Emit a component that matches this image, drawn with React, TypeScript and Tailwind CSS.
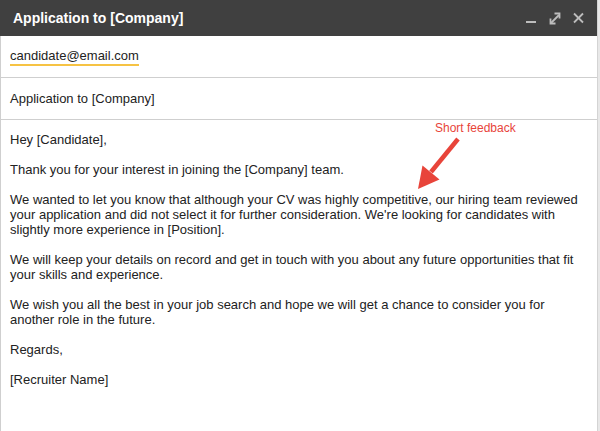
import React from "react";

const paragraphs: string[][] = [
  ["Hey [Candidate],"],
  ["Thank you for your interest in joining the [Company] team."],
  [
    "We wanted to let you know that although your CV was highly competitive, our hiring team reviewed",
    "your application and did not select it for further consideration. We're looking for candidates with",
    "slightly more experience in [Position].",
  ],
  [
    "We will keep your details on record and get in touch with you about any future opportunities that fit",
    "your skills and experience.",
  ],
  [
    "We wish you all the best in your job search and hope we will get a chance to consider you for",
    "another role in the future.",
  ],
  ["Regards,"],
  ["[Recruiter Name]"],
];

export default function App() {
  return (
    <div className="relative w-[600px] h-[431px] overflow-hidden bg-white font-['Liberation_Sans',Arial,sans-serif] text-[#222222]">
      <div className="flex h-full">
        <div className="flex w-[597px] flex-col">
          {/* Header */}
          <div className="flex h-[36px] items-center justify-between bg-[#404040] pl-[13px] pr-[12px]">
            <span className="text-[14px] font-bold leading-none text-white">Application to [Company]</span>
            <svg width="60" height="36" viewBox="0 0 60 36" className="shrink-0">
              <rect x="1" y="21" width="10" height="2" fill="#bdbdbd" />
              <g stroke="#bdbdbd" strokeWidth="1.8" fill="none">
                <line x1="26" y1="23" x2="34" y2="15" />
                <polyline points="25.5,18.5 25.5,23.5 30.5,23.5" />
                <polyline points="29.5,13.5 34.5,13.5 34.5,18.5" />
                <line x1="49" y1="13.5" x2="58" y2="22.5" />
                <line x1="58" y1="13.5" x2="49" y2="22.5" />
              </g>
            </svg>
          </div>
          {/* Content */}
          <div className="flex flex-1 flex-col border-l border-[#cfcfcf]">
            <div className="flex h-[42px] items-center border-b border-[#cfcfcf] pl-[9px] pt-[1px]">
              <span className="border-b-2 border-b-[#f6c344] pb-[1px] text-[13px] leading-[15px]">candidate@email.com</span>
            </div>
            <div className="flex h-[42px] items-center border-b border-[#cfcfcf] pl-[9px]">
              <span className="text-[13px] leading-[15px]">Application to [Company]</span>
            </div>
            <div className="flex flex-col gap-[15px] pl-[9px] pt-[12px] text-[13px] leading-[15px]">
              {paragraphs.map((p, i) => (
                <div key={i} className="flex flex-col">
                  {p.map((line, j) => (
                    <span key={j} className="whitespace-nowrap">
                      {line}
                    </span>
                  ))}
                </div>
              ))}
            </div>
          </div>
        </div>
        <div className="w-[3px] border-l border-[#d4d4d4] bg-[#e8e8e8]" />
      </div>

      {/* Annotation */}
      <span className="absolute left-[435px] top-[121px] text-[12px] leading-[14px] text-[#e8443a]">Short feedback</span>
      <svg className="absolute left-0 top-0" width="600" height="431" viewBox="0 0 600 431">
        <line x1="458" y1="139" x2="431" y2="172" stroke="#e8443a" strokeWidth="4.5" />
        <polygon points="418,189 439.5,179.5 422.5,165.5" fill="#e8443a" />
      </svg>
    </div>
  );
}
